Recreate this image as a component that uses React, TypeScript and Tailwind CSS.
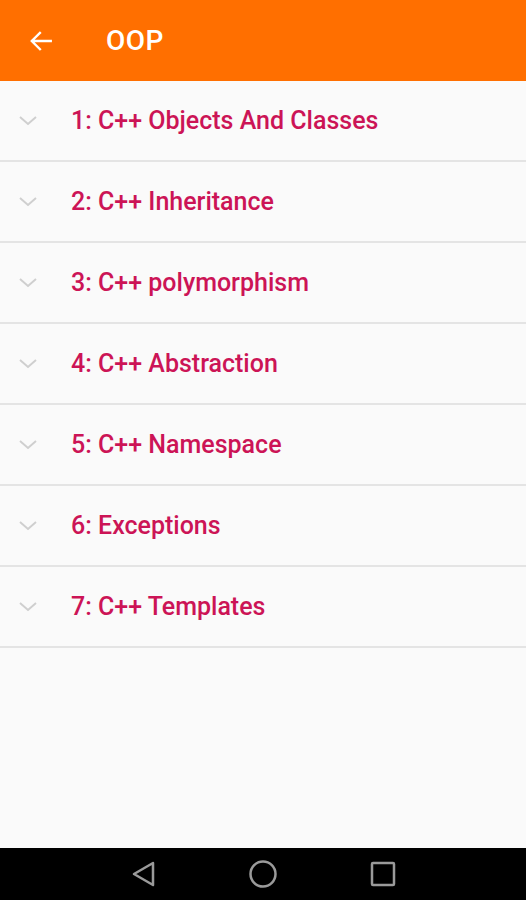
import React from 'react';

const topics = [
  '1: C++ Objects And Classes',
  '2: C++ Inheritance',
  '3: C++ polymorphism',
  '4: C++ Abstraction',
  '5: C++ Namespace',
  '6: Exceptions',
  '7: C++ Templates',
];

const Chevron = () => (
  <svg width="20" height="12" viewBox="0 0 20 12" className="shrink-0">
    <path d="M2 2 L10 9 L18 2" fill="none" stroke="#cfcfcf" strokeWidth="2" />
  </svg>
);

export default function App() {
  return (
    <div
      className="w-[526px] h-[900px] flex flex-col bg-[#fafafa]"
      style={{ fontFamily: 'Roboto, "Liberation Sans", sans-serif' }}
    >
      <div className="h-[81px] bg-[#ff6f00] flex items-center shrink-0">
        <svg width="26" height="26" viewBox="0 0 24 24" className="ml-[28px]">
          <path
            d="M21 12H4M11 4.5l-7.5 7.5 7.5 7.5"
            fill="none"
            stroke="#fff"
            strokeWidth="2.2"
            strokeLinecap="square"
          />
        </svg>
        <span className="ml-[52px] text-white text-[28px] font-medium tracking-[0.5px]">OOP</span>
      </div>

      <div className="flex-1 flex flex-col">
        {topics.map((t) => (
          <div
            key={t}
            className="h-[81px] border-b-2 border-[#e4e4e4] flex items-center pl-[18px]"
          >
            <Chevron />
            <span className="ml-[33px] text-[25px] font-medium text-[#cc1456]">{t}</span>
          </div>
        ))}
      </div>

      <div className="h-[52px] bg-black flex items-center justify-center gap-[92px] shrink-0">
        <svg width="26" height="28" viewBox="0 0 26 28">
          <path d="M23 3 L4 14 L23 25 Z" fill="none" stroke="#9a9a9a" strokeWidth="2.5" strokeLinejoin="round" />
        </svg>
        <svg width="30" height="30" viewBox="0 0 30 30">
          <circle cx="15" cy="15" r="12.5" fill="none" stroke="#9a9a9a" strokeWidth="2.5" />
        </svg>
        <svg width="26" height="26" viewBox="0 0 26 26">
          <rect x="2" y="2" width="22" height="22" fill="none" stroke="#9a9a9a" strokeWidth="2.5" rx="1" />
        </svg>
      </div>
    </div>
  );
}
